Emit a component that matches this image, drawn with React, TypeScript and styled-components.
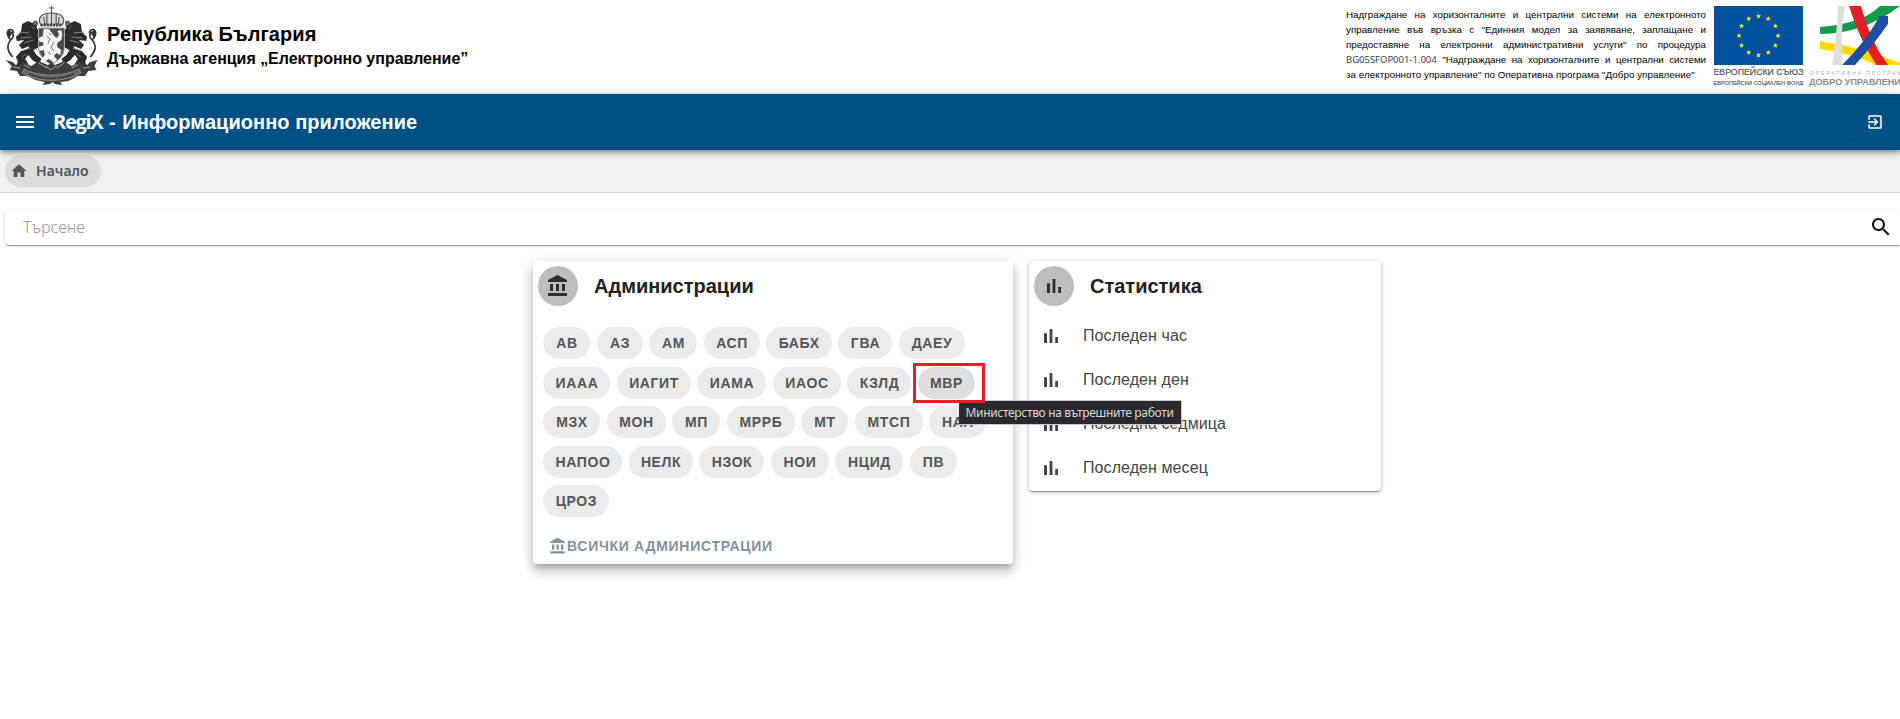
import React from 'react';
import styled, { createGlobalStyle } from 'styled-components';

const Global = createGlobalStyle`
  * { box-sizing: border-box; }
  html, body { margin: 0; height: 719px; overflow: hidden; background: #fff; }
  body { font-family: "Liberation Sans", Arial, sans-serif; color: rgba(0,0,0,.87); }
`;

const Page = styled.div`
  width: 100%;
  height: 719px;
  overflow: hidden;
  display: flex;
  flex-direction: column;
`;

const Header = styled.header`
  height: 94px;
  flex: none;
  display: flex;
  align-items: flex-start;
  padding: 5px 0 0 5px;
  background: linear-gradient(#fff 88px, #f7f7f7 94px);
`;

const Agency = styled.div`
  margin: 14px 0 0 9px;
  color: #000;
  font-weight: 700;
  white-space: nowrap;
`;
const Country = styled.div`
  font-size: 20px;
  line-height: 30px;
  letter-spacing: 0.08px;
`;
const AgencyName = styled.div`
  font-size: 16px;
  line-height: 20px;
  letter-spacing: -0.02px;
`;

const Funding = styled.p`
  margin: 2px 0 0 auto;
  width: 360px;
  color: #000;
  font: 9.8px/15px "Liberation Sans", Arial, sans-serif;
`;
const Line = styled.span<{ $last?: boolean; $tight?: boolean }>`
  display: block;
  white-space: nowrap;
  letter-spacing: ${(p) => (p.$tight ? '-0.08px' : p.$last ? '0.04px' : '0')};
  text-align-last: ${(p) => (p.$last ? 'left' : 'justify')};
`;
const Code = styled.span`
  color: #333;
  font-family: "Open Sans", "Noto Sans", sans-serif;
  font-size: 9.5px;
  letter-spacing: 0;
`;

const Logos = styled.div`
  display: flex;
  flex: none;
  width: 187px;
  margin-left: 7px;
  overflow: hidden;
`;

const Toolbar = styled.div`
  height: 56px;
  flex: none;
  display: flex;
  align-items: center;
  padding: 0 0 0 13px;
  background: #004f85;
  color: #fff;
  position: relative;
  z-index: 1;
  box-shadow: 0 2px 4px -1px rgba(0,0,0,.3), 0 4px 5px rgba(0,0,0,.16), 0 1px 10px rgba(0,0,0,.12);
`;
const AppTitle = styled.h1`
  margin: 0 0 0 16px;
  font-size: 20px;
  line-height: 28px;
  font-weight: 700;
  white-space: nowrap;
  letter-spacing: 0.05px;
`;
const Brand = styled.span`
  font-family: "Open Sans", "Noto Sans", sans-serif;
  font-weight: 700;
  letter-spacing: -1.3px;
`;
const Dash = styled.span`
  padding: 0 1px;
`;
const ExitButton = styled.button`
  margin-left: auto;
  width: 51px;
  height: 38px;
  padding: 0;
  display: flex;
  align-items: center;
  justify-content: center;
  border: 1px solid #00487b;
  border-right: 0;
  border-radius: 4px 0 0 4px;
  background: transparent;
  color: #fff;
`;

const Crumbs = styled.nav`
  height: 43px;
  flex: none;
  padding: 5px;
  background: #f0f0f0;
  border-bottom: 1px solid #d4d4d4;
`;
const Crumb = styled.a`
  display: inline-flex;
  align-items: center;
  width: 96px;
  height: 32px;
  padding: 0 0 1px 5px;
  gap: 8px;
  border-radius: 16px;
  background: #dcdcdc;
  color: #555;
  font: 600 14px "Noto Sans", sans-serif;
`;

const SearchBox = styled.div`
  flex: none;
  display: flex;
  align-items: center;
  justify-content: space-between;
  height: 36px;
  margin: 16px 0 0 5px;
  padding: 0 7px 0 18px;
  border-radius: 4px 0 0 4px;
  background: #fff;
  color: #111;
  box-shadow: 0 2px 1px -1px rgba(0,0,0,.2), 0 1px 1px rgba(0,0,0,.14), 0 1px 3px rgba(0,0,0,.2);
`;
const Placeholder = styled.span`
  color: #969696;
  font: 300 16px "Noto Sans", sans-serif;
`;

const Board = styled.main`
  display: flex;
  align-items: flex-start;
  gap: 16px;
  margin: 16px 0 0 533px;
`;
const Card = styled.section<{ $w: number; $h: number; $raised?: boolean }>`
  width: ${(p) => p.$w}px;
  height: ${(p) => p.$h}px;
  border-radius: 4px;
  background: #fff;
  box-shadow: ${(p) =>
    p.$raised
      ? '0 5px 5px -3px rgba(0,0,0,.2), 0 8px 10px 1px rgba(0,0,0,.14), 0 3px 14px 2px rgba(0,0,0,.12)'
      : '0 2px 1px -1px rgba(0,0,0,.2), 0 1px 1px rgba(0,0,0,.14), 0 1px 4px rgba(0,0,0,.3)'};
`;
const CardHead = styled.div`
  display: flex;
  align-items: center;
  gap: 16px;
  height: 50px;
  padding: 0 5px;
`;
const Avatar = styled.div`
  width: 40px;
  height: 40px;
  display: flex;
  align-items: center;
  justify-content: center;
  border-radius: 50%;
  background: #bdbdbd;
  color: #2f2f2f;
`;
const CardTitle = styled.h2`
  margin: 0;
  font-size: 20px;
  font-weight: 700;
  color: #212121;
`;
const ChipRows = styled.div`
  padding: 16px 10px 0;
  display: flex;
  flex-direction: column;
  gap: 7.5px;
`;
const ChipRow = styled.div`
  display: flex;
  gap: 6.5px;
`;
const Chip = styled.button<{ $w: number; $active?: boolean }>`
  position: relative;
  width: ${(p) => p.$w}px;
  height: 32px;
  flex: none;
  padding: 0 0 0 1px;
  border: 0;
  border-radius: 16px;
  background: ${(p) => (p.$active ? '#dedede' : '#ebebeb')};
  color: #555;
  font: 700 14px "Liberation Sans", Arial, sans-serif;
  letter-spacing: 0.6px;
  text-align: center;
`;
const Marker = styled.span`
  position: absolute;
  left: -5px;
  top: -4px;
  width: 72px;
  height: 40px;
  border: 3px solid #ed1c24;
  z-index: 3;
`;
const Tooltip = styled.span`
  position: absolute;
  left: 41px;
  top: 33px;
  width: 223px;
  height: 25px;
  z-index: 2;
  border: 1px solid #c9c9d2;
  border-left: 0;
  background: #2a2a2f;
  color: #d8d8d8;
  font: 400 12px/23px "Noto Sans", sans-serif;
  letter-spacing: -0.33px;
  padding-left: 7px;
  text-align: left;
  white-space: nowrap;
`;
const AllLink = styled.a`
  display: flex;
  align-items: center;
  margin: 20px 0 0 16px;
  color: #84919a;
  font-size: 14px;
  font-weight: 700;
  letter-spacing: 0.72px;
`;
const StatList = styled.div`
  padding-top: 2.5px;
`;
const StatItem = styled.div`
  display: flex;
  align-items: center;
  gap: 20px;
  height: 44px;
  padding-left: 10px;
  color: #444;
  font-size: 16px;
  letter-spacing: 0.08px;
`;

const Svg = styled.svg`
  display: block;
  flex: none;
`;

const Glyph = ({ d, size = 24 }: { d: string; size?: number }) => (
  <Svg width={size} height={size} viewBox="0 0 24 24" fill="currentColor">
    <path d={d} />
  </Svg>
);
const ICON = {
  menu: 'M3 18h18v-2H3v2zm0-5h18v-2H3v2zm0-7v2h18V6H3z',
  exit: 'M10.09 15.59L11.5 17l5-5-5-5-1.41 1.41L12.67 11H3v2h9.67l-2.58 2.59zM19 3H5c-1.11 0-2 .9-2 2v4h2V5h14v14H5v-4H3v4c0 1.1.89 2 2 2h14c1.1 0 2-.9 2-2V5c0-1.1-.9-2-2-2z',
  home: 'M10 20v-6h4v6h5v-8h3L12 3 2 12h3v8z',
  search: 'M15.5 14h-.79l-.28-.27C15.41 12.59 16 11.11 16 9.5 16 5.91 13.09 3 9.5 3S3 5.91 3 9.5 5.91 16 9.5 16c1.61 0 3.09-.59 4.23-1.57l.27.28v.79l5 4.99L20.49 19l-4.99-5zm-6 0C7.01 14 5 11.99 5 9.5S7.01 5 9.5 5 14 7.01 14 9.5 11.99 14 9.5 14z',
  bank: 'M4 10v7h3v-7H4zm6 0v7h3v-7h-3zM2 22h19v-3H2v3zm14-12v7h3v-7h-3zm-4.500-9L2 6v2h19V6l-9.500-5z',
  bars: 'M5 9.200h3V19H5zM10.600 5h2.800v14h-2.800zm5.600 8H19v6h-2.800z',
};

const SupporterLion = () => (
  <g>
    <path d="M24 16l4 2 2-2 3 3-1 4 4 4-3 3 4 5-2 7-6 3 3 5 5 4-3 5-6-4-4-5-3 4 3 5-4 4-8-2 2-4-2-5 5-6 7-2 1-3-7 3-3-4 5-5-7 1-1-4 5-5 1-8z" fill="#2c2c2c" />
    <path d="M9 52c-5-5-7-12-1-18 3-3 1-7-2-7m4 1c-1-4-5-5-6-1-1 4 2 6 3 8" fill="none" stroke="#333" strokeWidth="1.6" />
    <path d="M3 27l3-2 2 4-3 5z" fill="#333" />
    <path d="M15 27l10 1m-9 5l11-1m-7 6l9-3m-9 10l6-2m1-22l3 3m-12 28l4-3" stroke="#888" strokeWidth=".9" />
  </g>
);

const CoatOfArms = () => (
  <Svg width="93" height="81" viewBox="1.5 0 90 81" preserveAspectRatio="none">
    <SupporterLion />
    <g transform="translate(93 0) scale(-1 1)"><SupporterLion /></g>
    <path d="M34 23h25v20c0 8-6 13-12.500 17C40 56 34 51 34 43z" fill="#4a4a4a" stroke="#aaa" strokeWidth="1" />
    <path d="M39 24l5 0 3 4 3 4 2 1 2-4-2-3 4-1 1 4-1 6-4 3 0 4 4 3-1 5-4-2-2 3 3 4-3 3-5-4-5 3-3-2 4-5-1-5-4 1-1-4 5-2-1-3-3 0-1-4 4-2z" fill="#f2f2f2" />
    <path d="M42 31l3 3-2 5m6-2l-3 5 3 4m-5-18l2 2m-3 17l3 2" stroke="#666" fill="none" strokeWidth=".9" />
    <path d="M36 20c-4-8 2-12 10.500-12S61 12 57 20z" fill="#d8d8d8" stroke="#555" strokeWidth="1.200" />
    <path d="M46.500 1v7m-2.500-5h5m-7 6v10m9-10v10m-4.500-11v11M39 12l1 7m14-7l-1 7" stroke="#555" strokeWidth="1.100" />
    <path d="M36 20h21" stroke="#444" strokeWidth="3" strokeDasharray="2 1" />
    <circle cx="31" cy="18" r="2.500" fill="#666" /><circle cx="62" cy="18" r="2.500" fill="#666" />
    <path d="M2 55l7 2 4 4 6-4 8 4 7-5 9 4 3.500-2 3.500 2 9-4 7 5 8-4 6 4 4-4 7-2-3 6 2 4-8 1-3 5-7 0-9 5-8 1 2 3-7-1-2.500-2-2.500 2-7 1 2-3-9-2-8-4-7 0-3-5-7-1 2-4z" fill="#3d3d3d" />
    <path d="M20 64c15 8 38 8 53 0l2 4c-17 10-40 10-57 0z" fill="#666" stroke="#aaa" strokeWidth=".6" />
    <path d="M25 69c13 6 30 6 43 0" fill="none" stroke="#222" strokeWidth="1.600" strokeDasharray="1.500 1" />
    <path d="M9 62l7 1m4-3l6 3m40 0l6-3m5 3l7-1M34 58l8 5m17-5l-8 5m-10-2l5 4 5-4" stroke="#aaa" strokeWidth=".9" fill="none" />
  </Svg>
);

const star = (cx: number, cy: number) => {
  const pts = Array.from({ length: 10 }, (_, i) => {
    const r = i % 2 ? 1.2 : 2.8;
    const a = (Math.PI * i) / 5 - Math.PI / 2;
    return `${(cx + r * Math.cos(a)).toFixed(2)},${(cy + r * Math.sin(a)).toFixed(2)}`;
  }).join(' ');
  return <polygon key={`${cx}-${cy}`} points={pts} fill="#f5e625" />;
};

const EuLogo = () => (
  <Svg width="95" height="84" viewBox="0 0 95 84">
    <rect x="1" y="1" width="89" height="59" fill="#00529f" />
    {Array.from({ length: 12 }, (_, i) => star(45.5 + 19.5 * Math.sin((i * Math.PI) / 6), 30.7 - 19.5 * Math.cos((i * Math.PI) / 6)))}
    <g fontFamily="Liberation Sans" fill="#555">
      <text x="0.500" y="70" fontSize="9.300" textLength="90" lengthAdjust="spacingAndGlyphs" stroke="#555" strokeWidth=".2">ЕВРОПЕЙСКИ СЪЮЗ</text>
      <text x="0.500" y="79.500" fontSize="6.200" textLength="89.500" lengthAdjust="spacingAndGlyphs" stroke="#555" strokeWidth=".15">ЕВРОПЕЙСКИ СОЦИАЛЕН ФОНД</text>
    </g>
  </Svg>
);

const GovLogo = () => (
  <Svg width="92" height="84" viewBox="0 0 92 84">
    <path d="M12 36Q52 42 92 58V60H67Q48.500 50 12 44z" fill="#ffd800" />
    <path d="M12 22Q55 18.500 72 1H92Q55 29 12 29z" fill="#149a48" />
    <path d="M41 1H53Q62 36 80 60H68.500Q52 36 41 1z" fill="#e31e24" />
    <path d="M80 11V19Q67 38 47 60H34Q55 40 72 11z" fill="#1f4fa0" />
    <path d="M30 1H37Q32 28 34.500 60H24Q29 30 30 1z" fill="#dedede" />
    <g fontFamily="Liberation Sans">
      <text x="2" y="70" fontSize="5" fill="#aaa" textLength="97">ОПЕРАТИВНА ПРОГРАМА</text>
      <text x="1" y="79.500" fontSize="9.200" fontWeight="700" fill="#8c8c8c" textLength="98" lengthAdjust="spacingAndGlyphs">ДОБРО УПРАВЛЕНИЕ</text>
    </g>
  </Svg>
);

const chips: [string, number][][] = [
  [['АВ', 47], ['АЗ', 46], ['АМ', 48], ['АСП', 56], ['БАБХ', 65.5], ['ГВА', 54], ['ДАЕУ', 66]],
  [['ИААА', 67], ['ИАГИТ', 74], ['ИАМА', 69], ['ИАОС', 68], ['КЗЛД', 64], ['МВР', 57]],
  [['МЗХ', 57], ['МОН', 59], ['МП', 48], ['МРРБ', 68], ['МТ', 47], ['МТСП', 68], ['НАП', 57]],
  [['НАПОО', 79], ['НЕЛК', 64], ['НЗОК', 65], ['НОИ', 58], ['НЦИД', 68], ['ПВ', 47]],
  [['ЦРОЗ', 66]],
];

export default function App() {
  return (
    <Page>
      <Global />
      <Header>
        <CoatOfArms />
        <Agency>
          <Country>Република България</Country>
          <AgencyName>Държавна агенция „Електронно управление”</AgencyName>
        </Agency>
        <Funding>
          <Line>Надграждане на хоризонталните и централни системи на електронното</Line>
          <Line>управление във връзка с "Единния модел за заявяване, заплащане и</Line>
          <Line>предоставяне на електронни административни услуги" по процедура</Line>
          <Line $tight><Code>BG05SFOP001-1.004</Code> "Надграждане на хоризонталните и централни системи</Line>
          <Line $last>за електронното управление" по Оперативна програма "Добро управление"</Line>
        </Funding>
        <Logos>
          <EuLogo />
          <GovLogo />
        </Logos>
      </Header>
      <Toolbar>
        <Glyph d={ICON.menu} />
        <AppTitle><Brand>RegiX</Brand> <Dash>-</Dash> Информационно приложение</AppTitle>
        <ExitButton><Glyph d={ICON.exit} size={18} /></ExitButton>
      </Toolbar>
      <Crumbs>
        <Crumb><Glyph d={ICON.home} size={18} />Начало</Crumb>
      </Crumbs>
      <SearchBox><Placeholder>Търсене</Placeholder><Glyph d={ICON.search} /></SearchBox>
      <Board>
        <Card $w={480} $h={303} $raised>
          <CardHead>
            <Avatar><Glyph d={ICON.bank} /></Avatar>
            <CardTitle>Администрации</CardTitle>
          </CardHead>
          <ChipRows>
            {chips.map((row, i) => (
              <ChipRow key={i}>
                {row.map(([label, w]) => (
                  <Chip key={label} $w={w} $active={label === 'МВР'}>
                    {label}
                    {label === 'МВР' && <><Marker /><Tooltip>Министерство на вътрешните работи</Tooltip></>}
                  </Chip>
                ))}
              </ChipRow>
            ))}
          </ChipRows>
          <AllLink><Glyph d={ICON.bank} size={18} />ВСИЧКИ АДМИНИСТРАЦИИ</AllLink>
        </Card>
        <Card $w={352} $h={230}>
          <CardHead>
            <Avatar><Glyph d={ICON.bars} /></Avatar>
            <CardTitle>Статистика</CardTitle>
          </CardHead>
          <StatList>
            {['Последен час', 'Последен ден', 'Последна седмица', 'Последен месец'].map((t) => (
              <StatItem key={t}><Glyph d={ICON.bars} />{t}</StatItem>
            ))}
          </StatList>
        </Card>
      </Board>
    </Page>
  );
}
